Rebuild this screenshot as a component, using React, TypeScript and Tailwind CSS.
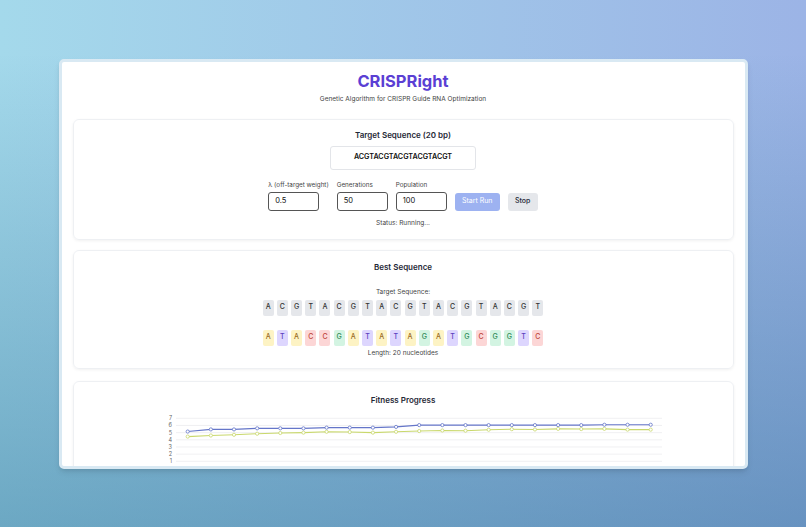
import React from "react";

const target = "ACGTACGTACGTACGTACGT".split("");
const best = "ATACCGATATAGATGCGGTC".split("");

const tileColor: Record<string, string> = {
  A: "bg-[#fdf3c4] text-[#9a6b1f]",
  T: "bg-[#ddd6fe] text-[#5b3fc0]",
  C: "bg-[#fcd6d6] text-[#c0463b]",
  G: "bg-[#d3f4e2] text-[#2f8a57]",
};

const bestFit = [5.15, 5.45, 5.45, 5.6, 5.6, 5.6, 5.7, 5.7, 5.7, 5.8, 6.05, 6.05, 6.05, 6.05, 6.05, 6.05, 6.05, 6.05, 6.1, 6.1, 6.1];
const avgFit = [4.45, 4.6, 4.7, 4.85, 4.95, 5.0, 5.12, 5.08, 5.0, 5.12, 5.22, 5.3, 5.27, 5.4, 5.48, 5.44, 5.53, 5.5, 5.53, 5.42, 5.42];

const px = (i: number) => 46.7 + i * 23.15;
const py = (v: number) => 7.3 + (7 - v) * 7.17;

function Chart() {
  const pts = (arr: number[]) => arr.map((v, i) => `${px(i)},${py(v)}`).join(" ");
  return (
    <svg width="524" height="62" viewBox="0 0 524 62" className="block">
      {[7, 6, 5, 4, 3, 2, 1, 0].map((v) => (
        <g key={v}>
          <line x1="35" x2="521" y1={py(v)} y2={py(v)} stroke="#ececef" strokeWidth="0.8" />
          {v > 0 && (
            <text
              x="31"
              y={py(v) + 2}
              textAnchor="end"
              fontSize="5.5"
              fill="#666"
              fontFamily="Inter, sans-serif"
            >
              {v}
            </text>
          )}
        </g>
      ))}
      <polyline points={pts(avgFit)} fill="none" stroke="#c9d86c" strokeWidth="1.1" />
      <polyline points={pts(bestFit)} fill="none" stroke="#6576c9" strokeWidth="1.1" />
      {avgFit.map((v, i) => (
        <circle key={"a" + i} cx={px(i)} cy={py(v)} r="1.6" fill="#fff" stroke="#c9d86c" strokeWidth="0.8" />
      ))}
      {bestFit.map((v, i) => (
        <circle key={"b" + i} cx={px(i)} cy={py(v)} r="1.6" fill="#fff" stroke="#6576c9" strokeWidth="0.8" />
      ))}
    </svg>
  );
}

function Field({ label, value }: { label: string; value: string }) {
  return (
    <div className="flex flex-col">
      <span className="text-[6.3px] leading-[9px] text-[#444] whitespace-nowrap">{label}</span>
      <div className="mt-[2px] w-[51px] h-[19px] border border-[#555] rounded-[3px] flex items-center px-[6px] text-[7.5px] text-[#111]">
        {value}
      </div>
    </div>
  );
}

export default function App() {
  return (
    <div
      className="w-[806px] h-[527px] flex items-center justify-center bg-[linear-gradient(to_bottom,rgba(30,100,140,0)_10%,rgba(30,100,140,0.42)),linear-gradient(to_right,#a4d9eb,#9cb4e6)]"
      style={{ fontFamily: "Inter, 'Noto Sans', sans-serif" }}
    >
      <div className="w-[689px] h-[410px] rounded-[5px] border-[3px] border-[#d9e9f3] bg-white overflow-hidden shadow-md">
        <div className="px-[11px] pt-[9px]">
          <div className="text-center">
            <h1 className="text-[16.5px] leading-[20px] font-bold text-[#5b3fd4]">CRISPRight</h1>
            <p className="mt-[3px] text-[6.5px] leading-[10px] text-[#444]">
              Genetic Algorithm for CRISPR Guide RNA Optimization
            </p>
          </div>

          {/* target sequence + controls */}
          <div className="mt-[15px] rounded-[6px] border border-[#eef0f3] shadow-[0_1px_3px_rgba(0,0,0,0.06)] pt-[9px] pb-[11px] flex flex-col items-center">
            <h2 className="text-[8px] leading-[12px] font-semibold text-[#1f2937]">Target Sequence (20 bp)</h2>
            <div className="mt-[5px] w-[146px] h-[24px] border border-[#e3e5e9] rounded-[3px] flex items-center justify-center text-[7.2px] font-semibold text-[#111]">
              ACGTACGTACGTACGTACGT
            </div>
            <div className="mt-[11px] flex items-end gap-[8px]">
              <Field label="λ (off-target weight)" value="0.5" />
              <Field label="Generations" value="50" />
              <Field label="Population" value="100" />
              <button className="h-[18px] w-[45px] rounded-[3px] bg-[#9db2f1] text-white text-[7px]">Start Run</button>
              <button className="h-[18px] w-[30px] rounded-[3px] bg-[#e5e7eb] text-[#1f2937] text-[7px] font-medium">Stop</button>
            </div>
            <p className="mt-[7px] text-[6.5px] leading-[10px] text-[#444]">Status: Running...</p>
          </div>

          {/* best sequence */}
          <div className="mt-[10px] rounded-[6px] border border-[#eef0f3] shadow-[0_1px_3px_rgba(0,0,0,0.06)] pt-[10px] pb-[10px] flex flex-col items-center">
            <h2 className="text-[8px] leading-[12px] font-semibold text-[#1f2937]">Best Sequence</h2>
            <p className="mt-[15px] text-[6.5px] leading-[9px] text-[#444]">Target Sequence:</p>
            <div className="mt-[3px] flex gap-[3.2px]">
              {target.map((n, i) => (
                <div
                  key={i}
                  className="w-[11px] h-[16px] rounded-[2px] bg-[#e5e7eb] text-[#333] flex items-center justify-center text-[7px] font-medium"
                >
                  {n}
                </div>
              ))}
            </div>
            <div className="mt-[14px] flex gap-[3.2px]">
              {best.map((n, i) => (
                <div
                  key={i}
                  className={`w-[11px] h-[16px] rounded-[2px] flex items-center justify-center text-[7px] font-medium ${tileColor[n]}`}
                >
                  {n}
                </div>
              ))}
            </div>
            <p className="mt-[3px] text-[6.5px] leading-[9px] text-[#444]">Length: 20 nucleotides</p>
          </div>

          {/* fitness chart */}
          <div className="mt-[12px] rounded-[6px] border border-[#eef0f3] shadow-[0_1px_3px_rgba(0,0,0,0.06)] pt-[12px] pb-[10px] flex flex-col items-center">
            <h2 className="text-[8px] leading-[12px] font-semibold text-[#1f2937]">Fitness Progress</h2>
            <div className="mt-[5px]">
              <Chart />
            </div>
          </div>
        </div>
      </div>
    </div>
  );
}
